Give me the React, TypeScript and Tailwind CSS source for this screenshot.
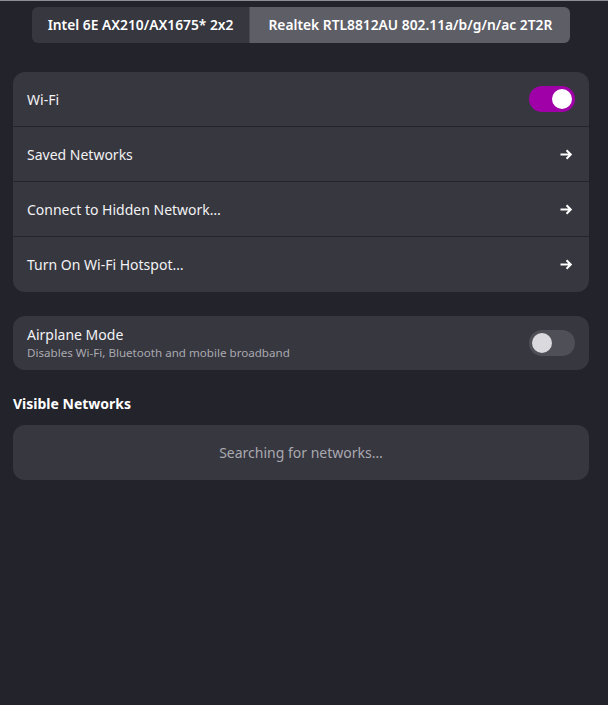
import React from "react";

const font = { fontFamily: '"Noto Sans", "Open Sans", sans-serif' };

function Arrow() {
  return (
    <svg width="13" height="11" viewBox="0 0 13 11" fill="none" className="text-white">
      <path d="M0.5 5.5h10.5M6.5 1.2L10.8 5.5L6.5 9.8" stroke="currentColor" strokeWidth="2" />
    </svg>
  );
}

function Toggle({ on }: { on: boolean }) {
  return (
    <div
      className={
        "w-[46px] h-[26px] rounded-full p-[3px] flex " +
        (on ? "bg-[#a000a8] justify-end" : "bg-[#4f4f58] justify-start")
      }
    >
      <div className={"w-[20px] h-[20px] rounded-full " + (on ? "bg-white" : "bg-[#dadade]")} />
    </div>
  );
}

function Row({ label, children, last }: { label: string; children: React.ReactNode; last?: boolean }) {
  return (
    <div
      className={
        "h-[55px] flex items-center justify-between pl-[14px] pr-[14px] " +
        (last ? "" : "border-b border-[#24242c]")
      }
    >
      <span className="text-[14px] text-[#f2f2f4]">{label}</span>
      <div className="flex items-center">{children}</div>
    </div>
  );
}

export default function App() {
  return (
    <div style={font} className="w-[608px] h-[705px] bg-[#22232b] border-t border-[#8e8e94] overflow-hidden">
      <div className="w-[602px]">
        <div className="flex justify-center pt-[6px]">
          <div className="flex rounded-[6px] overflow-hidden h-[36px]">
            <div className="px-[16px] flex items-center bg-[#36373f] text-white text-[13.8px] font-semibold border-r border-[#4a4a52]">
              Intel 6E AX210/AX1675* 2x2
            </div>
            <div className="px-[18px] flex items-center bg-[#5e5e66] text-white text-[13.8px] font-semibold">
              Realtek RTL8812AU 802.11a/b/g/n/ac 2T2R
            </div>
          </div>
        </div>

        <div className="px-[13px] pt-[29px]">
          <div className="rounded-[12px] bg-[#37373f] overflow-hidden">
            <Row label="Wi-Fi">
              <Toggle on />
            </Row>
            <Row label="Saved Networks">
              <div className="pr-[2px]"><Arrow /></div>
            </Row>
            <Row label="Connect to Hidden Network…">
              <div className="pr-[2px]"><Arrow /></div>
            </Row>
            <Row label="Turn On Wi-Fi Hotspot…" last>
              <div className="pr-[2px]"><Arrow /></div>
            </Row>
          </div>

          <div className="mt-[24px] rounded-[12px] bg-[#37373f] h-[54px] flex items-center justify-between px-[14px]">
            <div className="flex flex-col leading-tight">
              <span className="text-[14px] text-[#f2f2f4]">Airplane Mode</span>
              <span className="text-[11.6px] text-[#a9a9b0] mt-[3px]">Disables Wi-Fi, Bluetooth and mobile broadband</span>
            </div>
            <Toggle on={false} />
          </div>

          <div className="mt-[23px] text-[14px] font-bold text-white">Visible Networks</div>

          <div className="mt-[11px] rounded-[12px] bg-[#37373f] h-[55px] flex items-center justify-center">
            <span className="text-[14px] text-[#a9a9b0]">Searching for networks…</span>
          </div>
        </div>
      </div>
    </div>
  );
}
